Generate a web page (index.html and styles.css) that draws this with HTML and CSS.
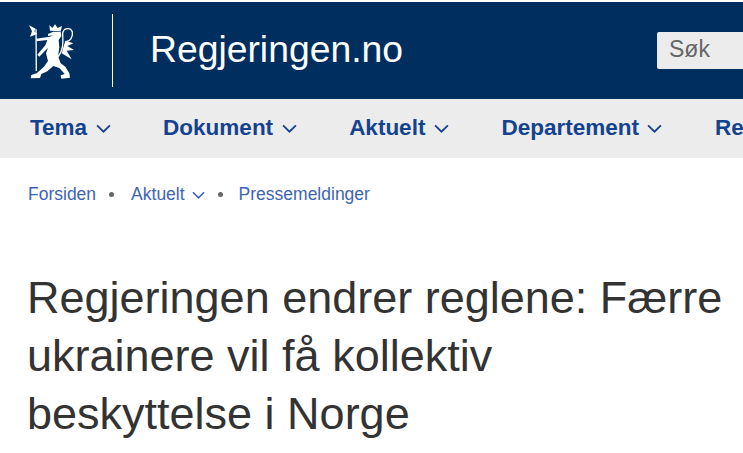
FILE: index.html
```
<!DOCTYPE html>
<html lang="no">
<head>
<meta charset="utf-8">
<title>Regjeringen.no</title>
<link rel="stylesheet" href="styles.css">
</head>
<body>
<div class="topline"></div>
<header class="header">
  <svg class="logo" viewBox="0 0 180 210" width="60" height="70" fill="#fff">
    <path d="M27 28 L47 38 L43 46 L52 54 L30 62 L36 46 Z"/>
    <path d="M46 40 L50 40 L51 165 L47 165 Z"/>
    <path d="M90 44 L88 28 L97 36 L105 25 L113 36 L126 30 L122 46 Z"/>
    <path d="M84 54 L100 47 L122 47 L124 60 L116 72 L118 95 L114 120 L122 142 L136 152 L148 172 L150 185 L124 188 L122 178 L134 174 L118 156 L100 150 L82 166 L64 174 L60 186 L32 187 L34 177 L50 172 L72 152 L84 135 L78 112 L84 95 L58 122 L52 116 L76 88 L82 72 L50 76 L48 68 L90 62 L98 58 L84 60 Z"/>
    <path fill="none" stroke="#fff" stroke-width="4" d="M112 125 C134 100 128 70 128 52 C130 36 152 32 157 48 C160 62 150 78 138 76"/>
    <path d="M136 74 L160 82 L142 90 L162 102 L140 104 L155 130 L125 112 Z"/>
  </svg>
  <div class="divider"></div>
  <a class="site-name">Regjeringen.no</a>
  <div class="search">Søk</div>
</header>
<nav class="nav">
  <a class="nav-item">Tema <svg class="chev" viewBox="0 0 14 8"><path d="M1 1 L7 7 L13 1"/></svg></a>
  <a class="nav-item">Dokument <svg class="chev" viewBox="0 0 14 8"><path d="M1 1 L7 7 L13 1"/></svg></a>
  <a class="nav-item">Aktuelt <svg class="chev" viewBox="0 0 14 8"><path d="M1 1 L7 7 L13 1"/></svg></a>
  <a class="nav-item">Departement <svg class="chev" viewBox="0 0 14 8"><path d="M1 1 L7 7 L13 1"/></svg></a>
  <a class="nav-item">Regjeringen</a>
</nav>
<div class="crumbs">
  <a>Forsiden</a><span class="dot"></span>
  <a>Aktuelt <svg class="chev small" viewBox="0 0 14 8"><path d="M1 1 L7 7 L13 1"/></svg></a><span class="dot dot-after-menu"></span>
  <a>Pressemeldinger</a>
</div>
<h1 class="title">Regjeringen endrer reglene: Færre ukrainere vil få kollektiv beskyttelse i Norge</h1>
</body>
</html>
```
FILE: styles.css
```
html, body { margin: 0; padding: 0; background: #fff; overflow: hidden; height: 453px; }
body { font-family: "Liberation Sans", Arial, sans-serif; }
.topline { height: 2px; background: #fff; }
.header { height: 97px; background: #002f5f; display: flex; align-items: center; position: relative; }
.logo { margin-left: 20px; flex: none; }
.divider { width: 1px; height: 73px; background: #fff; margin-left: 32px; }
.site-name { color: #fff; font-size: 37.300px; margin-left: 37px; padding-bottom: 3px; white-space: nowrap; }
.search { margin-left: auto; width: 86px; height: 37px; background: #ececec; border-radius: 2px 0 0 2px; color: #666; font-size: 23px; line-height: 35px; padding-left: 12px; box-sizing: border-box; }
.nav { height: 59px; padding-bottom: 2px; box-sizing: border-box; background: #ececec; display: flex; align-items: center; padding-left: 30px; gap: 52.500px; white-space: nowrap; overflow: hidden; }
.nav-item { color: #15428f; font-size: 22.500px; font-weight: 700; display: flex; align-items: center; gap: 8.500px; flex: none; }
.chev { width: 15px; height: 9px; fill: none; stroke: #15428f; stroke-width: 1.7; flex: none; margin-top: 2px; }
.crumbs { display: flex; align-items: center; padding: 26px 0 0 28px; font-size: 17.500px; color: #3e64b5; height: 20px; line-height: 20px; white-space: nowrap; }
.crumbs a { display: flex; align-items: center; gap: 7px; }
.chev.small { width: 13px; height: 8px; stroke: #3e64b5; }
.dot { width: 5px; height: 5px; border-radius: 50%; background: #666; margin: 0 17px 0 13px; }
.dot-after-menu { margin: 0 16px 0 13px; }
.title { margin: 65px 0 0 27px; width: 700px; font-size: 45px; line-height: 58px; font-weight: 400; color: #333; }
```
